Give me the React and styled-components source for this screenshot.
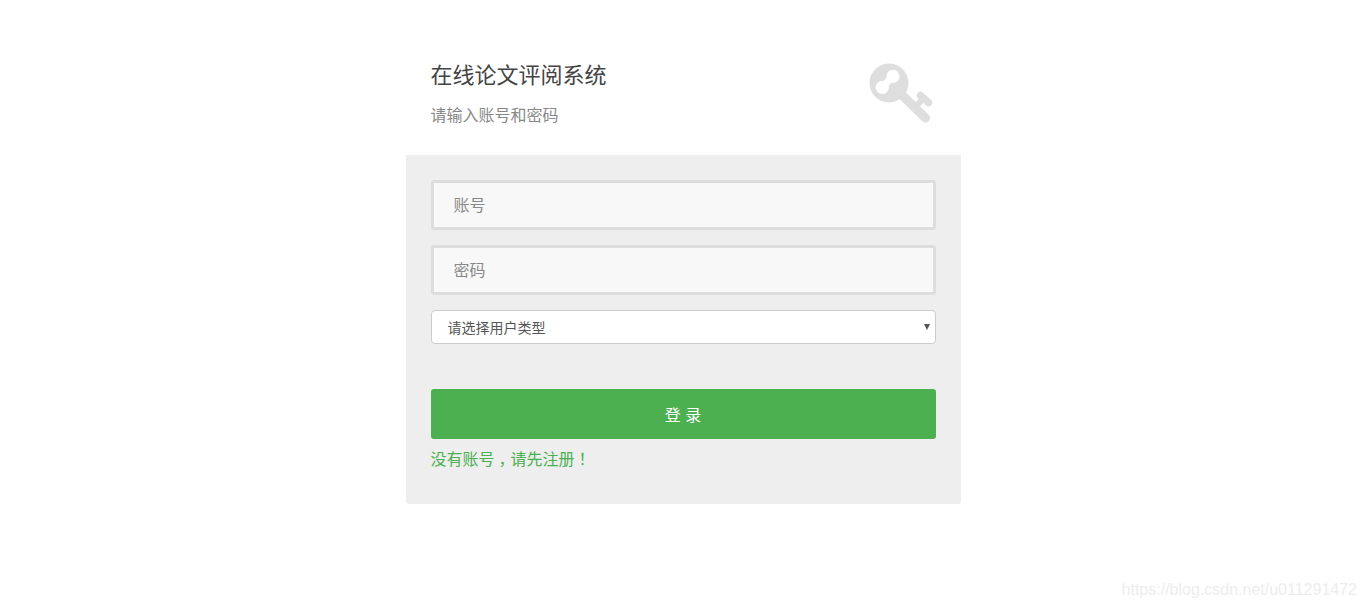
import React from 'react'
import styled, { createGlobalStyle } from 'styled-components'

const GlobalStyle = createGlobalStyle`
  html, body {
    margin: 0;
    padding: 0;
    background: #fff;
    font-family: "Liberation Sans", "Noto Sans CJK SC", sans-serif;
  }
  * {
    box-sizing: border-box;
  }
`

const Page = styled.div`
  min-height: 609px;
  padding-top: 45px;
  overflow: hidden;
`

const LoginBox = styled.div`
  width: 555px;
  margin: 0 auto;
`

const Header = styled.div`
  height: 110px;
  padding: 15px 25px 0 25px;
  display: flex;
  justify-content: space-between;
`

const Title = styled.h3`
  margin: 0 0 12px;
  font-size: 22px;
  line-height: 32px;
  font-weight: 400;
  color: #444;
`

const SubTitle = styled.p`
  margin: 0;
  font-size: 16px;
  line-height: 23px;
  color: #888;
`

const KeyIcon = styled.svg`
  width: 70px;
  height: 66px;
  fill: #dedede;
  stroke: #dedede;
  stroke-linecap: round;
`

const Form = styled.form`
  height: 349px;
  padding: 25px;
  background: #eee;
  border-radius: 0 0 3px 3px;
`

const Input = styled.input`
  display: block;
  width: 100%;
  height: 50px;
  margin-bottom: 15px;
  padding: 2px 20px 0;
  background: #f8f8f8;
  border: 3px solid #ddd;
  border-radius: 3px;
  outline: none;
  font: 16px "Liberation Sans", "Noto Sans CJK SC", sans-serif;
  color: #555;

  &::placeholder {
    color: #888;
    opacity: 1;
  }
`

const SelectWrap = styled.div`
  position: relative;

  &::after {
    content: '';
    position: absolute;
    top: 14px;
    right: 6px;
    border-left: 3.5px solid transparent;
    border-right: 3.5px solid transparent;
    border-top: 6px solid #555;
    pointer-events: none;
  }
`

const Select = styled.select`
  display: block;
  width: 100%;
  height: 34px;
  padding: 2px 16px 0;
  appearance: none;
  background-color: #fff;
  border: 1px solid #ccc;
  border-radius: 4px;
  outline: none;
  font: 14px "Liberation Sans", "Noto Sans CJK SC", sans-serif;
  color: #555;
`

const SubmitButton = styled.button`
  display: block;
  width: 100%;
  height: 50px;
  margin-top: 45px;
  background: #4caf50;
  border: none;
  border-radius: 3px;
  font: 16px "Liberation Sans", "Noto Sans CJK SC", sans-serif;
  color: #fff;
  cursor: pointer;
`

const RegisterLink = styled.a`
  display: block;
  margin-top: 9px;
  font-size: 16px;
  line-height: 23px;
  color: #4caf50;
  text-decoration: none;
`

// full-width punctuation sits in the middle of its cell in the reference
const Punct = styled.span`
  padding: 0 4px;
  font-feature-settings: "halt";
`

const Watermark = styled.div`
  position: absolute;
  right: 9px;
  bottom: 9px;
  font-size: 16px;
  line-height: 20px;
  color: #ededed;
`

const App = () => {
  return (
    <Page>
      <GlobalStyle />
      <LoginBox>
        <Header>
          <div>
            <Title>在线论文评阅系统</Title>
            <SubTitle>请输入账号和密码</SubTitle>
          </div>
          <KeyIcon viewBox="0 0 70 66">
            <circle cx="23" cy="23" r="19.5" stroke="none" />
            <circle cx="16.3" cy="27.3" r="6.6" fill="#fff" stroke="none" />
            <circle cx="27" cy="16.3" r="6.6" fill="#fff" stroke="none" />
            <line x1="16.3" y1="27.3" x2="27" y2="16.3" stroke="#fff" strokeWidth="7" />
            <line x1="36" y1="35" x2="59.5" y2="58" strokeWidth="9" />
            <line x1="50" y1="46" x2="57" y2="39" strokeWidth="6" strokeLinecap="butt" />
            <line x1="54.5" y1="35.5" x2="62.5" y2="42.5" strokeWidth="7.5" />
          </KeyIcon>
        </Header>
        <Form onSubmit={(e) => e.preventDefault()}>
          <Input type="text" placeholder="账号" />
          <Input type="password" placeholder="密码" />
          <SelectWrap>
            <Select defaultValue="">
              <option value="">请选择用户类型</option>
              <option value="student">学生</option>
              <option value="teacher">教师</option>
            </Select>
          </SelectWrap>
          <SubmitButton type="submit">登 录</SubmitButton>
          <RegisterLink href="#">
            没有账号<Punct>，</Punct>请先注册<Punct>！</Punct>
          </RegisterLink>
        </Form>
      </LoginBox>
      <Watermark>https://blog.csdn.net/u011291472</Watermark>
    </Page>
  )
}

export default App
